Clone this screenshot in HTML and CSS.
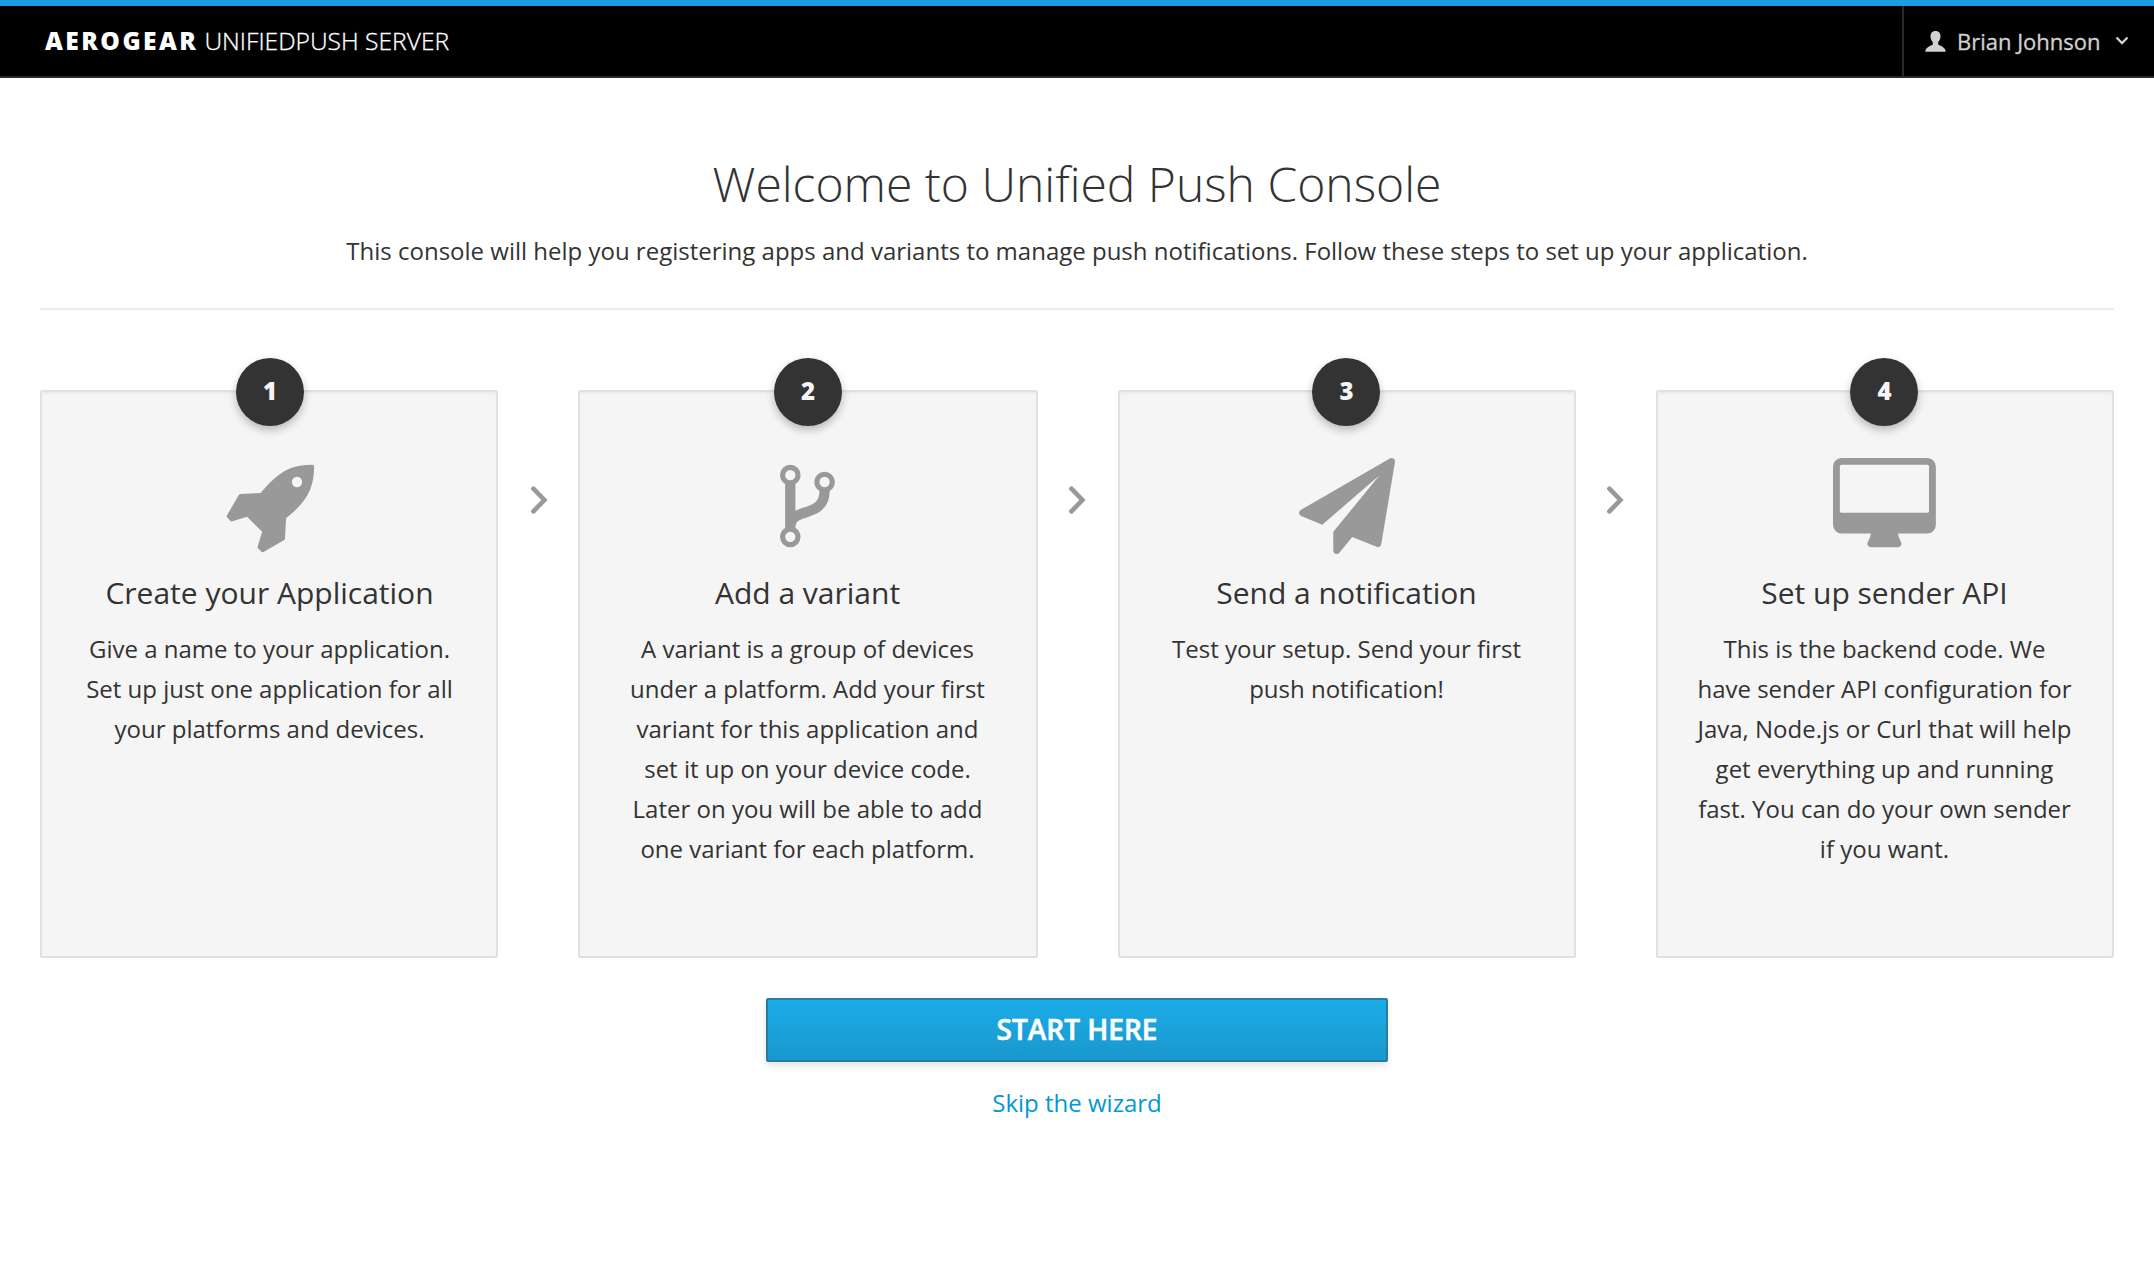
FILE: index.html
```html
<!DOCTYPE html>
<html lang="en">
<head>
<meta charset="utf-8">
<title>AeroGear UnifiedPush Server</title>
<link rel="stylesheet" href="styles.css">
</head>
<body>
<header class="navbar">
  <a class="brand"><strong class="brand-name">AEROGEAR</strong><span class="brand-product">UNIFIEDPUSH SERVER</span></a>
  <div class="user-menu">
    <svg class="user-icon" viewBox="0 0 21 21"><path d="M10.500 0C14 0 15.500 2.300 15.500 5.300C15.500 8 14.400 9.800 13.200 11.200V13.300C13.500 14.600 20.700 15.500 20.700 20.800H.3C.3 15.500 7.500 14.600 7.800 13.300V11.200C6.600 9.800 5.500 8 5.500 5.300C5.500 2.300 7 0 10.500 0Z"/></svg>
    <span class="user-name">Brian Johnson</span>
    <svg class="caret" viewBox="0 0 14 9"><path d="M1.500 1.500L7 7L12.500 1.500"/></svg>
  </div>
</header>
<main class="page">
  <section class="intro">
    <h1 class="title">Welcome to Unified Push Console</h1>
    <p class="lead">This console will help you registering apps and variants to manage push notifications. Follow these steps to set up your application.</p>
  </section>
  <ol class="steps">
    <li class="step step-first">
      <span class="badge badge-first">1</span>
      <svg class="step-icon" width="89.140" height="96" viewBox="0 -1536 1664 1792"><path transform="scale(1 -1)" d="M1440 1088q0 40 -28 68t-68 28t-68 -28t-28 -68t28 -68t68 -28t68 28t28 68zM1664 1376q0 -249 -75.500 -430.500t-253.500 -360.500q-81 -80 -195 -176l-20 -379q-2 -16 -16 -26l-384 -224q-7 -4 -16 -4q-12 0 -23 9l-64 64q-13 14 -8 32l85 276l-281 281l-276 -85q-3 -1 -9 -1q-14 0 -23 9l-64 64q-17 19 -5 39l224 384q10 14 26 16l379 20q96 114 176 195q188 187 358 258t431 71q14 0 24 -9.500t10 -22.500z"/></svg>
      <h2 class="step-title">Create your Application</h2>
      <p class="step-text">Give a name to your application. Set up just one application for all your platforms and devices.</p>
    </li>
    <li class="arrow arrow-first"><svg class="arrow-icon" viewBox="0 0 17 28"><path d="M2.400 2.600L13.400 14L2.400 25.400"/></svg></li>
    <li class="step">
      <span class="badge">2</span>
      <svg class="step-icon" width="54.860" height="96" viewBox="0 -1536 1024 1792"><path transform="scale(1 -1)" d="M288 64q0 40 -28 68t-68 28t-68 -28t-28 -68t28 -68t68 -28t68 28t28 68zM288 1216q0 40 -28 68t-68 28t-68 -28t-28 -68t28 -68t68 -28t68 28t28 68zM928 1088q0 40 -28 68t-68 28t-68 -28t-28 -68t28 -68t68 -28t68 28t28 68zM1024 1088q0 -52 -26 -96.500t-70 -69.500q-2 -287 -226 -414q-67 -38 -203 -81q-128 -40 -169.500 -71t-41.500 -100v-26q44 -25 70 -69.500t26 -96.500q0 -80 -56 -136t-136 -56t-136 56t-56 136q0 52 26 96.500t70 69.500v820q-44 25 -70 69.500t-26 96.500q0 80 56 136t136 56t136 -56t56 -136q0 -52 -26 -96.500t-70 -69.500v-497q54 26 154 57q55 17 87.500 29.500t70.500 31t59 39.500t40.500 51t28 69.500t8.500 91.500q-44 25 -70 69.500t-26 96.500q0 80 56 136t136 56t136 -56t56 -136z"/></svg>
      <h2 class="step-title">Add a variant</h2>
      <p class="step-text">A variant is a group of devices under a platform. Add your first variant for this application and set it up on your device code. Later on you will be able to add one variant for each platform.</p>
    </li>
    <li class="arrow"><svg class="arrow-icon" viewBox="0 0 17 28"><path d="M2.400 2.600L13.400 14L2.400 25.400"/></svg></li>
    <li class="step">
      <span class="badge badge-late">3</span>
      <svg class="step-icon" width="96" height="96" viewBox="0 -1536 1792 1792"><path transform="scale(1 -1)" d="M1764 1525q33 -24 27 -64l-256 -1536q-5 -29 -32 -45q-14 -8 -31 -8q-11 0 -24 5l-453 185l-242 -295q-18 -23 -49 -23q-13 0 -22 4q-19 7 -30.500 23.500t-11.500 36.500v349l864 1059l-1069 -925l-395 162q-37 14 -40 55q-2 40 32 59l1664 960q15 9 32 9q20 0 36 -11z"/></svg>
      <h2 class="step-title">Send a notification</h2>
      <p class="step-text">Test your setup. Send your first push notification!</p>
    </li>
    <li class="arrow"><svg class="arrow-icon" viewBox="0 0 17 28"><path d="M2.400 2.600L13.400 14L2.400 25.400"/></svg></li>
    <li class="step">
      <span class="badge badge-late">4</span>
      <svg class="step-icon" width="102.860" height="96" viewBox="0 -1536 1920 1792"><path transform="scale(1 -1)" d="M1792 544v832q0 13 -9.500 22.500t-22.500 9.500h-1600q-13 0 -22.500 -9.500t-9.500 -22.500v-832q0 -13 9.500 -22.500t22.500 -9.500h1600q13 0 22.500 9.500t9.500 22.500zM1920 1376v-1088q0 -66 -47 -113t-113 -47h-544q0 -37 16 -77.500t32 -71t16 -43.500q0 -26 -19 -45t-45 -19h-512q-26 0 -45 19t-19 45q0 14 16 44t32 70t16 78h-544q-66 0 -113 47t-47 113v1088q0 66 47 113t113 47h1600q66 0 113 -47t47 -113z"/></svg>
      <h2 class="step-title">Set up sender API</h2>
      <p class="step-text">This is the backend code. We have sender API configuration for Java, Node.js or Curl that will help get everything up and running fast. You can do your own sender if you want.</p>
    </li>
  </ol>
  <div class="actions">
    <button class="start">START HERE</button>
    <a class="skip">Skip the wizard</a>
  </div>
</main>
</body>
</html>
```

FILE: styles.css
```css
* { box-sizing: border-box; }

body {
  margin: 0;
  background: #fff;
  color: #333;
  font: 24px/40px "Open Sans", sans-serif;
}

h1, h2, p, ol { margin: 0; padding: 0; font-weight: 400; }

.navbar {
  display: flex;
  justify-content: space-between;
  height: 78px;
  background: #000;
  border-top: 6px solid #1b9ddf;
  border-bottom: 2px solid #292929;
}

.brand {
  display: flex;
  align-items: center;
  padding-left: 45px;
  color: #fff;
  font-size: 24.600px;
}
.brand-name { font-weight: 800; letter-spacing: 2.450px; margin-right: 6px; }
.brand-product { font-weight: 300; -webkit-text-stroke: .3px; }

.user-menu {
  display: flex;
  align-items: center;
  width: 252px;
  padding: 0 25px 0 21px;
  border-left: 2px solid #292929;
  color: #d1d1d1;
}
.user-icon { width: 21px; height: 21px; margin: 1px 11px 0 0; fill: #d1d1d1; }
.user-name { font-size: 22px; -webkit-text-stroke: .3px; }
.caret {
  width: 14px;
  height: 9px;
  margin: 0 0 1px auto;
  fill: none;
  stroke: #d1d1d1;
  stroke-width: 2.300;
}

.page { padding: 0 40px; }

.intro {
  height: 232px;
  padding-top: 80px;
  border-bottom: 2px solid #ededed;
  text-align: center;
}
.title { font-size: 48px; font-weight: 300; line-height: 52px; margin-bottom: 21px; }

.steps {
  display: grid;
  grid-template-columns: 458px 80px 460px 80px 458px 80px 458px;
  height: 568px;
  margin-top: 80px;
  list-style: none;
}
.step {
  position: relative;
  display: flex;
  flex-direction: column;
  align-items: center;
  padding: 66px 38px 0 37px;
  background: #f5f5f5;
  border: 2px solid #e1e1e1;
  border-radius: 2px;
  box-shadow: inset 0 2px 2px rgba(0, 0, 0, .04);
  text-align: center;
}
.step-first { padding: 66px 37px 0 38px; }
.badge {
  position: absolute;
  top: -34px;
  left: calc(50% - 34px);
  width: 68px;
  height: 68px;
  border-radius: 50%;
  background: #333;
  color: #f5f5f5;
  font-weight: 800;
  line-height: 66px;
  box-shadow: 0 4px 8px rgba(0, 0, 0, .25);
}
.badge-first { left: calc(50% - 33px); }
.badge-late { left: calc(50% - 35px); padding-left: 1px; }
.step-icon { flex: none; fill: #999; overflow: visible; }
.step-title { font-size: 30px; line-height: 36px; margin: 21px 0 18px; }

.arrow { padding: 96px 0 0 31px; }
.arrow-first { padding-left: 32.500px; }
.arrow-icon {
  display: block;
  width: 17px;
  height: 28px;
  fill: none;
  stroke: #999;
  stroke-width: 4.600;
  stroke-linecap: round;
}

.actions {
  display: flex;
  flex-direction: column;
  align-items: center;
  margin-top: 40px;
}
.start {
  width: 622px;
  height: 64px;
  padding: 0 0 2px;
  border: 2px solid #267da1;
  border-radius: 2px;
  background: linear-gradient(#1cace8, #1998cc);
  box-shadow: 0 4px 6px rgba(0, 0, 0, .1);
  color: #fff;
  font: 600 28px/36px "Open Sans", sans-serif;
  -webkit-text-stroke: .6px;
}
.skip { margin-top: 21px; color: #0099d3; }
```
